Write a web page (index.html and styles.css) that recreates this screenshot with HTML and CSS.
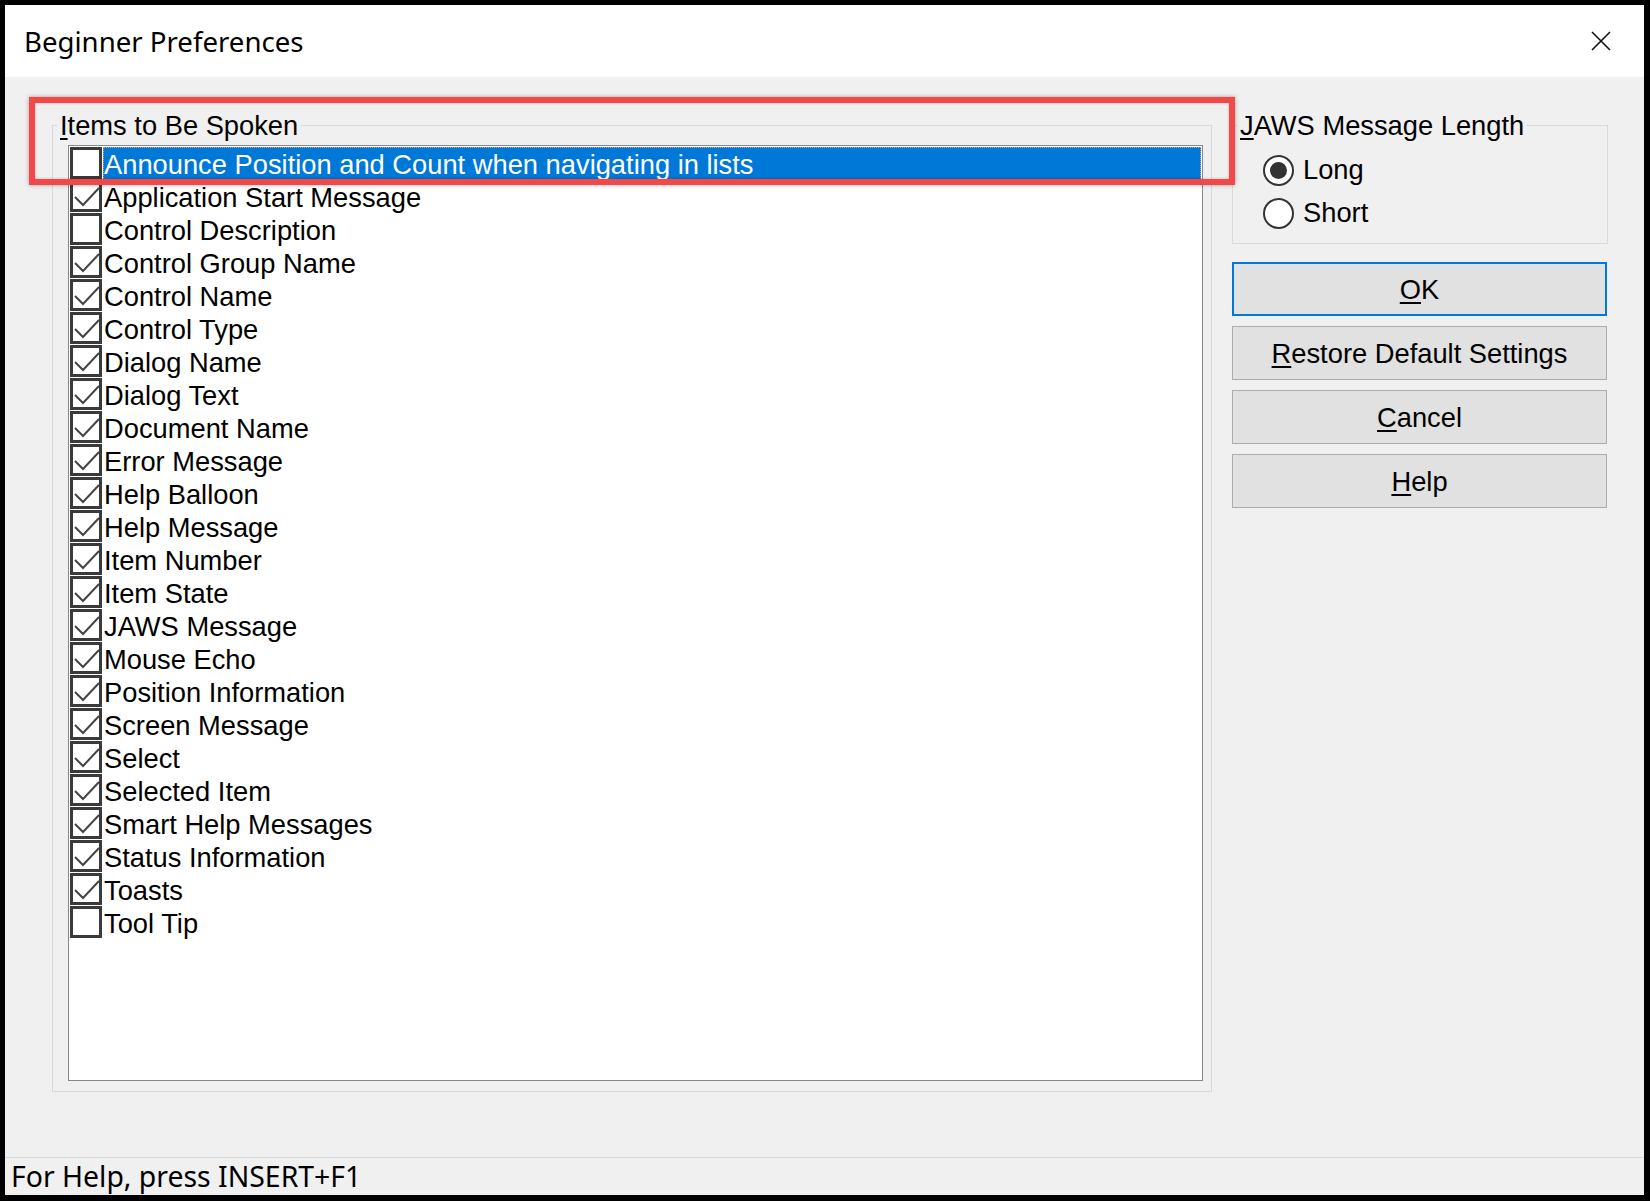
FILE: index.html
```html
<!DOCTYPE html>
<html>
<head>
<meta charset="utf-8">
<title>Beginner Preferences</title>
<link rel="stylesheet" href="styles.css">
</head>
<body>
<div class="window">
  <div class="titlebar">
    <span class="title">Beginner Preferences</span>
    <svg class="close" viewBox="0 0 20 20" width="20" height="20"><path d="M1 1 L19 19 M19 1 L1 19"/></svg>
  </div>
  <div class="content">
    <div class="group items">
      <div class="group-label"><u>I</u>tems to Be Spoken</div>
      <div class="listbox">
        <div class="row selected"><span class="cb"></span><span class="txt">Announce Position and Count when navigating in lists</span></div>
        <div class="row"><span class="cb"><svg viewBox="0 0 26 26"><polyline points="2,14 10,22 26,5"/></svg></span><span class="txt">Application Start Message</span></div>
        <div class="row"><span class="cb"></span><span class="txt">Control Description</span></div>
        <div class="row"><span class="cb"><svg viewBox="0 0 26 26"><polyline points="2,14 10,22 26,5"/></svg></span><span class="txt">Control Group Name</span></div>
        <div class="row"><span class="cb"><svg viewBox="0 0 26 26"><polyline points="2,14 10,22 26,5"/></svg></span><span class="txt">Control Name</span></div>
        <div class="row"><span class="cb"><svg viewBox="0 0 26 26"><polyline points="2,14 10,22 26,5"/></svg></span><span class="txt">Control Type</span></div>
        <div class="row"><span class="cb"><svg viewBox="0 0 26 26"><polyline points="2,14 10,22 26,5"/></svg></span><span class="txt">Dialog Name</span></div>
        <div class="row"><span class="cb"><svg viewBox="0 0 26 26"><polyline points="2,14 10,22 26,5"/></svg></span><span class="txt">Dialog Text</span></div>
        <div class="row"><span class="cb"><svg viewBox="0 0 26 26"><polyline points="2,14 10,22 26,5"/></svg></span><span class="txt">Document Name</span></div>
        <div class="row"><span class="cb"><svg viewBox="0 0 26 26"><polyline points="2,14 10,22 26,5"/></svg></span><span class="txt">Error Message</span></div>
        <div class="row"><span class="cb"><svg viewBox="0 0 26 26"><polyline points="2,14 10,22 26,5"/></svg></span><span class="txt">Help Balloon</span></div>
        <div class="row"><span class="cb"><svg viewBox="0 0 26 26"><polyline points="2,14 10,22 26,5"/></svg></span><span class="txt">Help Message</span></div>
        <div class="row"><span class="cb"><svg viewBox="0 0 26 26"><polyline points="2,14 10,22 26,5"/></svg></span><span class="txt">Item Number</span></div>
        <div class="row"><span class="cb"><svg viewBox="0 0 26 26"><polyline points="2,14 10,22 26,5"/></svg></span><span class="txt">Item State</span></div>
        <div class="row"><span class="cb"><svg viewBox="0 0 26 26"><polyline points="2,14 10,22 26,5"/></svg></span><span class="txt">JAWS Message</span></div>
        <div class="row"><span class="cb"><svg viewBox="0 0 26 26"><polyline points="2,14 10,22 26,5"/></svg></span><span class="txt">Mouse Echo</span></div>
        <div class="row"><span class="cb"><svg viewBox="0 0 26 26"><polyline points="2,14 10,22 26,5"/></svg></span><span class="txt">Position Information</span></div>
        <div class="row"><span class="cb"><svg viewBox="0 0 26 26"><polyline points="2,14 10,22 26,5"/></svg></span><span class="txt">Screen Message</span></div>
        <div class="row"><span class="cb"><svg viewBox="0 0 26 26"><polyline points="2,14 10,22 26,5"/></svg></span><span class="txt">Select</span></div>
        <div class="row"><span class="cb"><svg viewBox="0 0 26 26"><polyline points="2,14 10,22 26,5"/></svg></span><span class="txt">Selected Item</span></div>
        <div class="row"><span class="cb"><svg viewBox="0 0 26 26"><polyline points="2,14 10,22 26,5"/></svg></span><span class="txt">Smart Help Messages</span></div>
        <div class="row"><span class="cb"><svg viewBox="0 0 26 26"><polyline points="2,14 10,22 26,5"/></svg></span><span class="txt">Status Information</span></div>
        <div class="row"><span class="cb"><svg viewBox="0 0 26 26"><polyline points="2,14 10,22 26,5"/></svg></span><span class="txt">Toasts</span></div>
        <div class="row"><span class="cb"></span><span class="txt">Tool Tip</span></div>
      </div>
    </div>
    <div class="side">
      <div class="group jaws">
        <div class="group-label"><u>J</u>AWS Message Length</div>
        <div class="radio-row"><span class="radio on"></span><span class="rtxt">Long</span></div>
        <div class="radio-row"><span class="radio"></span><span class="rtxt">Short</span></div>
      </div>
      <div class="btn default"><span><u>O</u>K</span></div>
      <div class="btn"><span><u>R</u>estore Default Settings</span></div>
      <div class="btn"><span><u>C</u>ancel</span></div>
      <div class="btn"><span><u>H</u>elp</span></div>
    </div>
  </div>
  <div class="statusbar">For Help, press INSERT+F1</div>
  <div class="annot"></div>
</div>
</body>
</html>
```
FILE: styles.css
```css
html, body {
  margin: 0;
  padding: 0;
  background: #000;
}
body {
  width: 1650px;
  height: 1201px;
  overflow: hidden;
}
.window {
  position: relative;
  margin: 5px 0 0 5px;
  width: 1639px;
  height: 1190px;
  background: #f0f0f0;
  display: flex;
  flex-direction: column;
  font-family: "Liberation Sans", Arial, sans-serif;
  font-size: 27.3px;
  color: #000;
}
.titlebar {
  height: 72px;
  background: #fff;
  display: flex;
  align-items: center;
  justify-content: space-between;
  padding-left: 19px;
  box-sizing: border-box;
  flex: none;
}
.title {
  font-family: "Noto Sans", "Open Sans", sans-serif;
  font-size: 27.6px;
  line-height: 1;
  margin-top: 2px;
}
.close {
  margin-right: 33px;
  margin-top: -1px;
  fill: none;
  stroke: #111;
  stroke-width: 1.6;
}
.content {
  flex: 1;
  display: flex;
  align-items: flex-start;
  padding: 48px 0 0 47px;
  gap: 20px;
  box-sizing: border-box;
}
.group {
  border: 1px solid #d9d9d9;
  box-sizing: border-box;
}
.group-label {
  width: fit-content;
  background: #f0f0f0;
  line-height: 33px;
  padding: 0 3px;
  margin-top: -17px;
  white-space: nowrap;
}
u {
  text-decoration-thickness: 2px;
  text-underline-offset: 3px;
}
.items {
  width: 1160px;
  padding: 0 8px 10px 15px;
}
.items .group-label {
  margin-left: -11px;
  margin-bottom: 3px;
}
.listbox {
  width: 1135px;
  height: 936px;
  box-sizing: border-box;
  border: 1px solid #828790;
  background: #fff;
  padding: 1px;
}
.row {
  display: flex;
  height: 33px;
}
.cb {
  width: 32px;
  height: 32px;
  box-sizing: border-box;
  border: 3px solid #3a3a3a;
  background: #fff;
  flex: none;
}
.cb svg {
  display: block;
  width: 26px;
  height: 26px;
  fill: none;
  stroke: #444;
  stroke-width: 2;
}
.txt {
  flex: 1;
  margin-left: 1px;
  padding-left: 1px;
  line-height: 33px;
  padding-top: 1px;
  height: 33px;
  box-sizing: border-box;
  white-space: nowrap;
}
.selected .txt {
  background: #0078d7;
  color: #fff;
  outline: 1px dotted #d8a060;
  outline-offset: -1px;
}
.side {
  width: 376px;
  display: flex;
  flex-direction: column;
  gap: 10px;
}
.jaws {
  width: 376px;
  height: 119px;
  padding: 0 0 8px 30px;
  margin-bottom: 8px;
}
.jaws .group-label {
  margin-left: -26px;
  margin-bottom: 7px;
}
.radio-row {
  display: flex;
  align-items: center;
  height: 43px;
}
.radio {
  width: 31px;
  height: 31px;
  box-sizing: border-box;
  border: 2.5px solid #333;
  border-radius: 50%;
  background: #fff;
  display: flex;
  align-items: center;
  justify-content: center;
  flex: none;
}
.radio.on::after {
  content: "";
  width: 17px;
  height: 17px;
  border-radius: 50%;
  background: #333;
}
.rtxt {
  margin-left: 9px;
  line-height: 33px;
  margin-top: -2px;
}
.btn {
  width: 375px;
  height: 54px;
  box-sizing: border-box;
  border: 1px solid #adadad;
  background: #e1e1e1;
  display: flex;
  align-items: center;
  justify-content: center;
  line-height: 33px;
}
.btn.default {
  border: 2px solid #0078d7;
}
.statusbar {
  height: 38px;
  box-sizing: border-box;
  border-top: 1px solid #d7d7d7;
  flex: none;
  font-family: "Noto Sans", "Open Sans", sans-serif;
  font-size: 28.4px;
  line-height: 36px;
  padding-left: 6px;
  white-space: nowrap;
}
.annot {
  position: absolute;
  left: 24px;
  top: 92px;
  width: 1206px;
  height: 88px;
  box-sizing: border-box;
  border: 6px solid #f24848;
  box-shadow: 0 0 4px rgba(0, 0, 0, 0.35), inset 0 0 3px rgba(0, 0, 0, 0.25);
}
```
